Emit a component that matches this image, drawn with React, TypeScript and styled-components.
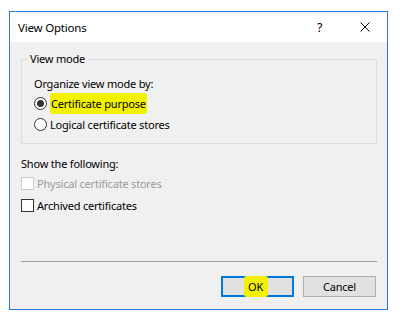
import React from 'react';
import styled, {createGlobalStyle} from 'styled-components';

const Global = createGlobalStyle`
    html, body {
        margin:0;
        padding:0;
        background:#ffffff;
        font-family:"Noto Sans", "Liberation Sans", sans-serif;
        font-size:11px;
        letter-spacing:-0.2px;
        color:#000000;
    }
`;

const Page = styled.div`
    padding:11px 0 0 9px;
`;

const Window = styled.div`
    width:379px;
    height:299px;
    box-sizing:border-box;
    border:1px solid #2b7bd4;
    display:flex;
    flex-direction:column;
    background:#f0f0f0;
`;

const TitleBar = styled.div`
    height:30px;
    flex:none;
    background:#ffffff;
    display:flex;
    align-items:center;
    padding:0 0 0 8px;
`;

const TitleText = styled.div`
    flex:1;
    font-size:11.5px;
    padding-top:1px;
`;

const TitleButton = styled.div`
    width:45px;
    height:30px;
    display:flex;
    align-items:center;
    justify-content:center;
    font-size:12.5px;
`;

const Body = styled.div`
    flex:1;
    display:flex;
    flex-direction:column;
    padding:9px 10px 12px 11px;
`;

const Group = styled.fieldset`
    margin:0;
    padding:0 0 8px 12px;
    border:1px solid #dcdcdc;
    display:flex;
    flex-direction:column;
    & > legend {
        margin-left:-7px;
        padding:0 3px;
        line-height:16px;
    }
`;

const Label = styled.div<{top?: number}>`
    height:17px;
    line-height:16px;
    margin-top:${p => p.top || 0}px;
`;

const OptionRow = styled.div<{h: number; disabled?: boolean}>`
    height:${p => p.h}px;
    display:flex;
    align-items:center;
    gap:3px;
    color:${p => p.disabled ? '#9a9a9a' : '#000000'};
`;

const Radio = styled.span<{checked?: boolean}>`
    width:13px;
    height:13px;
    box-sizing:border-box;
    border:1px solid #333333;
    border-radius:50%;
    background:#ffffff;
    display:flex;
    align-items:center;
    justify-content:center;
    &::after {
        content:"";
        width:7px;
        height:7px;
        border-radius:50%;
        background:${p => p.checked ? '#333333' : 'transparent'};
    }
`;

const Check = styled.span<{disabled?: boolean}>`
    width:13px;
    height:13px;
    box-sizing:border-box;
    border:1px solid ${p => p.disabled ? '#cccccc' : '#333333'};
    background:#ffffff;
`;

const Marker = styled.span<{wide?: boolean}>`
    background:#f2f200;
    border-radius:3px;
    padding:${p => p.wide ? '3px 5px 3px 4px' : '3px 1px'};
    margin-right:${p => p.wide ? '3px' : '0'};
`;

const Separator = styled.div`
    margin-top:auto;
    height:1px;
    background:#a0a0a0;
`;

const Footer = styled.div`
    display:flex;
    justify-content:flex-end;
    gap:9px;
    margin-top:14px;
    padding-right:1px;
`;

const Button = styled.div<{primary?: boolean}>`
    width:73px;
    height:21px;
    box-sizing:border-box;
    background:#e1e1e1;
    border:${p => p.primary ? '2px solid #0078d7' : '1px solid #adadad'};
    display:flex;
    align-items:center;
    justify-content:center;
`;

const App = () => {
    return (
        <>
        <Global/>
        <Page>
            <Window>
                <TitleBar>
                    <TitleText>View Options</TitleText>
                    <TitleButton>?</TitleButton>
                    <TitleButton>
                        <svg width="10" height="10" viewBox="0 0 10 10">
                            <path d="M0.5 0.5L9.5 9.5M9.5 0.5L0.5 9.5" stroke="#000" strokeWidth="1"/>
                        </svg>
                    </TitleButton>
                </TitleBar>
                <Body>
                    <Group>
                        <legend>View mode</legend>
                        <Label top={9}>Organize view mode by:</Label>
                        <OptionRow h={21}><Radio checked/><Marker>Certificate purpose</Marker></OptionRow>
                        <OptionRow h={21}><Radio/>Logical certificate stores</OptionRow>
                    </Group>
                    <Label top={12}>Show the following:</Label>
                    <OptionRow h={21} disabled><Check disabled/>Physical certificate stores</OptionRow>
                    <OptionRow h={23}><Check/>Archived certificates</OptionRow>
                    <Separator/>
                    <Footer>
                        <Button primary><Marker wide>OK</Marker></Button>
                        <Button>Cancel</Button>
                    </Footer>
                </Body>
            </Window>
        </Page>
        </>
    );
}

export default App;
